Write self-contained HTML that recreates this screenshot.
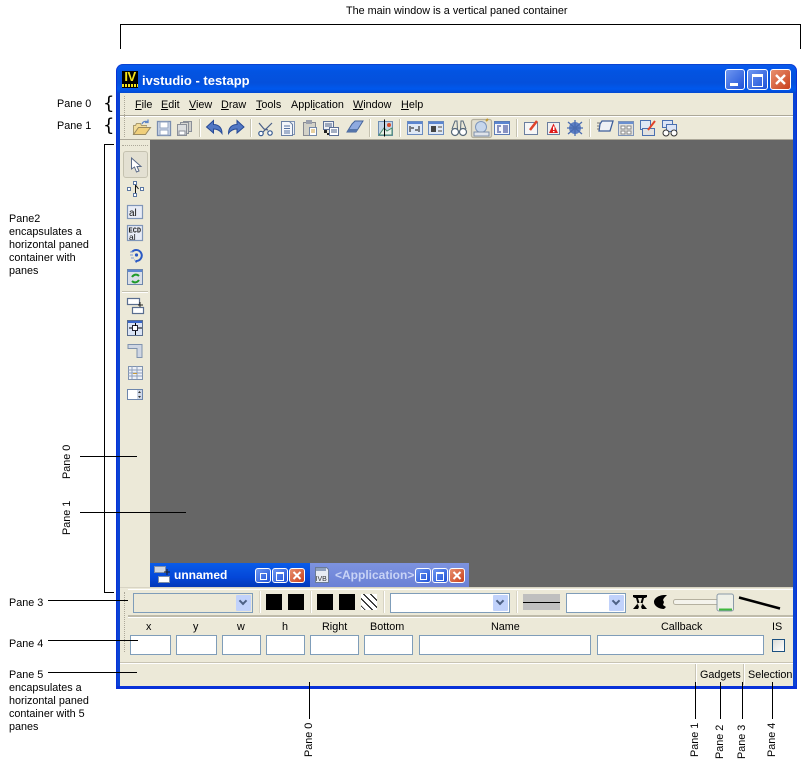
<!DOCTYPE html>
<html><head><meta charset="utf-8"><style>
html,body{margin:0;padding:0;background:#fff;width:801px;height:768px;overflow:hidden}
body{position:relative;font:10.8px "Liberation Sans",sans-serif;color:#000}
.a,.t,.l,svg,.i{position:absolute}
.t{white-space:nowrap;line-height:13px}
.l{background:#000}
.r{transform:rotate(-90deg);transform-origin:0 0}
.inp{position:absolute;box-sizing:border-box;background:#fff;border:1px solid #7f9db9}
.sep{position:absolute;width:1px;background:#c5c2b0;border-right:1px solid #fff}
.cmb{position:absolute;box-sizing:border-box;background:#fff;border:1px solid #7f9db9;height:20px}
.cmb i{position:absolute;right:1px;top:1px;width:15px;height:16px;background:#c1d2fb;border-radius:1px}
.cmb i:after{content:"";position:absolute;left:4px;top:3px;width:4px;height:4px;border:solid #4d6185;border-width:0 2px 2px 0;transform:rotate(45deg)}
.b{position:absolute;width:16px;height:16px;background:#000}
u{text-decoration:underline}
.wb{position:absolute;box-sizing:border-box;border:1px solid #fff;border-radius:3px;background:linear-gradient(135deg,#6f97f0,#1f52d8)}
.wb.x{background:linear-gradient(135deg,#e8906e,#c9401d)}
</style></head><body>

<!-- window frame -->
<div class="a" style="left:116px;top:64px;width:681px;height:625px;box-sizing:border-box;background:#0a43d4;border-radius:7px 7px 0 0;border-bottom:3px solid #0831d9;border-left:1px solid #0831d9;border-right:1px solid #0831d9"></div>
<div class="a" style="left:117px;top:65px;width:679px;height:28px;border-radius:6px 6px 0 0;background:linear-gradient(#0a5be6 0,#0558ee 3px,#0354e2 6px,#0450dc 18px,#0058ee 24px,#0349d0 28px)"></div>
<!-- title icon -->
<div class="a" style="left:122px;top:71px;width:16px;height:17px;background:#000"></div>
<div class="t" style="left:122px;top:70px;width:16px;text-align:center;color:#f4e31a;font:bold 13px/14px 'Liberation Sans',sans-serif;letter-spacing:-.5px">IV</div>
<div class="a" style="left:122px;top:84px;width:16px;height:3px;background:repeating-linear-gradient(90deg,#f4e31a 0 2px,#000 2px 3px)"></div>
<div class="t" style="left:142px;top:73px;color:#fff;font:bold 13px/16px 'Liberation Sans',sans-serif">ivstudio - testapp</div>
<!-- win buttons -->
<div class="wb" style="left:725px;top:69px;width:20px;height:21px"><div class="a" style="left:4px;top:13px;width:8px;height:3px;background:#fff"></div></div>
<div class="wb" style="left:747px;top:69px;width:21px;height:21px"><div class="a" style="left:4px;top:4px;width:9px;height:9px;border:1px solid #fff;border-top-width:3px"></div></div>
<div class="wb x" style="left:770px;top:69px;width:21px;height:21px"><svg style="left:3px;top:3px" width="13" height="13"><path d="M2 2L11 11M11 2L2 11" stroke="#fff" stroke-width="2.400" fill="none"/></svg></div>

<!-- client -->
<div class="a" style="left:120px;top:93px;width:673px;height:593px;background:#ece9d8"></div>
<!-- menu -->
<div class="a" style="left:120px;top:115px;width:673px;height:1px;background:#aca899"></div>
<div class="a" style="left:120px;top:116px;width:673px;height:1px;background:#fff"></div>
<div class="a" style="left:124px;top:96px;width:1px;height:41px;border-left:1px dotted #aca899"></div>
<div class="t" style="left:135px;top:99px"><u>F</u>ile</div>
<div class="t" style="left:161px;top:99px"><u>E</u>dit</div>
<div class="t" style="left:189px;top:99px"><u>V</u>iew</div>
<div class="t" style="left:221px;top:99px"><u>D</u>raw</div>
<div class="t" style="left:256px;top:99px"><u>T</u>ools</div>
<div class="t" style="left:291px;top:99px">Appl<u>i</u>cation</div>
<div class="t" style="left:353px;top:99px"><u>W</u>indow</div>
<div class="t" style="left:401px;top:99px"><u>H</u>elp</div>

<!-- toolbar separators -->
<div class="sep" style="left:199px;top:119px;height:18px"></div>
<div class="sep" style="left:250px;top:119px;height:18px"></div>
<div class="sep" style="left:369px;top:119px;height:18px"></div>
<div class="sep" style="left:399px;top:119px;height:18px"></div>
<div class="sep" style="left:516px;top:119px;height:18px"></div>
<div class="sep" style="left:589px;top:119px;height:18px"></div>

<!-- toolbar icons -->
<svg style="left:0;top:0" width="801" height="768" fill="none" stroke-width="1">
 <!-- open -->
 <path d="M133.500 134.500v-9h2l1-2h4l1 2h5v1" fill="#f2dc9a" stroke="#a89a70"/>
 <path d="M133.500 134.500h12l5-7h-12z" fill="#f0cf7a" stroke="#9a8a60"/>
 <path d="M142 124c1-3 4-3 6-2M148 119.500v3h-3" stroke="#5f86c6" stroke-width="1.300"/>
 <!-- save -->
 <rect x="157.500" y="121.500" width="13" height="14" fill="#cfd9ea" stroke="#7a8eb0" stroke-width="1.300"/><rect x="160" y="122" width="8" height="6" fill="#fff" stroke="#93a4c0"/><rect x="160" y="130" width="8" height="5" fill="#fff" stroke="#93a4c0"/>
 <!-- save all -->
 <rect x="183.500" y="121.500" width="8" height="10" fill="#d0d0cc" stroke="#8a8f98"/><rect x="180.500" y="122.500" width="8" height="11" fill="#d8d8d4" stroke="#8a8f98"/><rect x="177.500" y="124.500" width="9" height="11" fill="#dcdedf" stroke="#8a8f98"/><rect x="179" y="131" width="6" height="4" fill="#fff" stroke="#8a8f98"/>
 <!-- undo / redo -->
 <path d="M206.500 127l7-6.500v4c5 0 8.500 3 8.500 9-2-3-5-4.500-8.500-4.500v4z" fill="#5278c4" stroke="#274a96"/>
 <path d="M244 127l-7-6.500v4c-5 0-8.500 3-8.500 9 2-3 5-4.500 8.500-4.500v4z" fill="#5278c4" stroke="#274a96"/>
 <!-- cut -->
 <path d="M272 123l-9 9M259 123l5 6 4 1" stroke="#4a5f87" stroke-width="1.200"/><circle cx="261" cy="133.500" r="2.200" fill="#fff" stroke="#34588f" stroke-width="1.200"/><circle cx="270" cy="133" r="2.200" fill="#fff" stroke="#34588f" stroke-width="1.200"/>
 <!-- copy -->
 <rect x="285.500" y="121.500" width="9" height="13" fill="#eef1f6" stroke="#7f93b4"/><path d="M281.500 121.500h8l3 3v11h-11z" fill="#f4f6fa" stroke="#6a80a4"/><path d="M284 126h6M284 128.500h6M284 131h6M284 133h6" stroke="#5470a0"/>
 <!-- paste -->
 <rect x="303.500" y="122.500" width="12" height="13" fill="#d4d2c8" stroke="#888a92"/><rect x="306" y="120" width="6" height="4" fill="#9ba0ad"/><rect x="309.500" y="127.500" width="7" height="8" fill="#fff" stroke="#7488a8"/><path d="M311 130h4M311 132h4" stroke="#d0a040"/>
 <!-- paste special -->
 <path d="M323.500 121.500h10v8h-10z" fill="#eef1f6" stroke="#5b6f96"/><path d="M329.500 127.500h9v8h-9z" fill="#fff" stroke="#5b6f96"/><path d="M325 124h7M325 126h7M331 130h6M331 132h6" stroke="#4a5f87"/><rect x="324" y="130" width="3" height="3" fill="#222"/><rect x="327" y="133" width="2" height="2" fill="#222"/>
 <!-- eraser -->
 <path d="M347 132l5-8 3-3h8l-5 8-2 3z" fill="#8eaae0" stroke="#45649a"/><path d="M347 132h9l2-3h-9z" fill="#5575aa"/>
 <!-- image bar -->
 <rect x="378.500" y="121.500" width="14" height="14" fill="#c3d4e4" stroke="#6d8db4"/><path d="M379 135l5-7 3 3 5-3v7z" fill="#e8f0e8" stroke="#4a8c6a"/><circle cx="389" cy="125" r="2" fill="#d94f2a"/><path d="M384.500 119.500v17" stroke="#000"/>
 <!-- windows -->
 <rect x="407.500" y="121.500" width="15" height="13" fill="#dfe8f5" stroke="#6a8bc0"/><rect x="408" y="122" width="14" height="2" fill="#5b85d0"/><path d="M410 126v6M419 132v-6M411 128h3M415 130h3" stroke="#111"/>
 <rect x="428.500" y="121.500" width="15" height="13" fill="#dfe8f5" stroke="#6a8bc0"/><rect x="429" y="122" width="14" height="2" fill="#5b85d0"/><rect x="431" y="126" width="5" height="6" fill="#444"/><rect x="438" y="126" width="4" height="2" fill="#999"/><rect x="438" y="130" width="4" height="2" fill="#999"/>
 <!-- binoculars -->
 <circle cx="455" cy="132" r="3.500" fill="#fff" stroke="#56687a" stroke-width="1.200"/><circle cx="463" cy="132" r="3.500" fill="#fff" stroke="#56687a" stroke-width="1.200"/><path d="M452 129l3-8h2l.5 9M466 129l-3-8h-2l-.5 9" stroke="#56687a"/>
 <!-- inspector selected -->
 <rect x="471.500" y="119.500" width="20" height="18" rx="2" fill="#e2dfd0" stroke="#b5b1a0" stroke-width="1.300"/>
 <circle cx="481" cy="127" r="5.500" fill="#c6d6ec" stroke="#7e96bc"/><path d="M474 136h15v-4h-15z" fill="#dfe3ea" stroke="#7e8fa9"/><path d="M486 121l2-2" stroke="#c09a30" stroke-width="2"/>
 <!-- list -->
 <rect x="494.500" y="121.500" width="15" height="13" fill="#f4f6fb" stroke="#5b7bb5"/><rect x="495" y="122" width="14" height="2" fill="#5b85d0"/><path d="M497 126h4M497 128h2M497 130h2M497 132h4M503 126h5M503 128h5M503 130h5M503 132h5" stroke="#1b2f8a"/>
 <!-- edit -->
 <rect x="524.500" y="122.500" width="13" height="12" fill="#f6f6f6" stroke="#6a7e9f"/><path d="M530 130l7-9" stroke="#e0442a" stroke-width="2.500"/>
 <!-- warn -->
 <rect x="547.500" y="122.500" width="12" height="12" fill="#f0f0f0" stroke="#6a7e9f"/><path d="M553.500 123.500l4.500 9.500h-9z" fill="#e01b1b"/><rect x="553" y="126.500" width="1.500" height="3.500" fill="#fff"/><rect x="553" y="131" width="1.500" height="1.200" fill="#fff"/>
 <!-- bug -->
 <circle cx="575" cy="128" r="6" fill="#5d7fc4"/><path d="M568 122l14 12M568 134l14-12M575 120v16M567 128h16" stroke="#4a6cb0" stroke-width="1.300"/>
 <!-- book -->
 <path d="M600 124l2-3h11l-3 10h-11z" fill="#eef1f6" stroke="#3f5f9a" stroke-width="1.300"/><path d="M597 123h3M597 126h2M597 129h2" stroke="#777"/>
 <!-- grid -->
 <rect x="618.500" y="121.500" width="15" height="14" fill="#e2e2e0" stroke="#7d93b8"/><rect x="619" y="122" width="14" height="2" fill="#6a8fd0"/><rect x="621" y="126" width="4" height="3" fill="#fff" stroke="#888"/><rect x="627" y="126" width="4" height="3" fill="#fff" stroke="#888"/><rect x="621" y="131" width="4" height="3" fill="#fff" stroke="#888"/><rect x="627" y="131" width="4" height="3" fill="#fff" stroke="#888"/>
 <!-- edit windows -->
 <rect x="640.500" y="120.500" width="10" height="9" fill="#dfe8f5" stroke="#4a70b0"/><rect x="642.500" y="128.500" width="12" height="7" fill="#e2e2e0" stroke="#4a70b0"/><path d="M648 130l7-9" stroke="#e0442a" stroke-width="2"/>
 <!-- find windows -->
 <rect x="662.500" y="120.500" width="10" height="7" fill="#dbe4f5" stroke="#4a70b0"/><rect x="666.500" y="124.500" width="10" height="7" fill="#dbe4f5" stroke="#4a70b0"/><circle cx="666" cy="133" r="3" fill="#fff" stroke="#333"/><circle cx="674" cy="133" r="3" fill="#fff" stroke="#333"/>
</svg>

<!-- main area -->
<div class="a" style="left:120px;top:139px;width:673px;height:1px;background:#aca899"></div>
<div class="a" style="left:150px;top:140px;width:643px;height:447px;background:#666"></div>
<div class="a" style="left:122px;top:145px;width:26px;height:1px;border-top:1px dotted #aca899"></div>
<div class="a" style="left:123px;top:151px;width:25px;height:27px;box-sizing:border-box;background:#e3e0d2;border:1px solid #c5c2b0;border-radius:3px"></div>
<div class="a" style="left:122px;top:291px;width:26px;height:1px;background:#c5c2b0"></div>
<div class="a" style="left:122px;top:292px;width:26px;height:1px;background:#fff"></div>

<svg style="left:0;top:0" width="801" height="768" fill="none">
 <path d="M131.500 158v11l3-2 2 5 2.500-1-2-4.500h4z" fill="#fff" stroke="#5a6a88"/>
 <path d="M135.500 184v10M135.500 185l3 4" stroke="#111"/><rect x="127.500" y="187.500" width="3" height="3" fill="#fff" stroke="#5a76a2"/><rect x="133.500" y="181.500" width="3" height="3" fill="#fff" stroke="#5a76a2"/><rect x="140.500" y="187.500" width="3" height="3" fill="#fff" stroke="#5a76a2"/><rect x="133.500" y="193.500" width="3" height="3" fill="#fff" stroke="#5a76a2"/>
 <rect x="127.500" y="205.500" width="15" height="13" fill="#e8ecf6" stroke="#8096b8" stroke-width="1.200"/><text x="129" y="216" font-family="Liberation Sans" font-size="10" fill="#111">al</text>
 <rect x="127.500" y="225.500" width="15" height="15" fill="#e8ecf6" stroke="#8096b8" stroke-width="1.200"/><text x="128.500" y="232.500" font-family="Liberation Mono" font-size="7" font-weight="bold" fill="#222">ECD</text><text x="129" y="240" font-family="Liberation Sans" font-size="8.500" fill="#111">al</text>
 <path d="M132 252a5.500 5.500 0 1 1 4 9" stroke="#2a59c4" stroke-width="2"/><circle cx="136.500" cy="255" r="1.600" fill="#2a59c4"/><path d="M130 252h3M130 255h3M131 258h3" stroke="#7f9ad2"/><path d="M134 259l3 3-1 1z" fill="#2a59c4"/>
 <rect x="127.500" y="269.500" width="15" height="15" fill="#d9dee8" stroke="#6d86ac"/><rect x="128" y="270" width="14" height="2" fill="#5b85d0"/><path d="M132 277c2-3 5-3 7-1M139 280c-2 3-5 3-7 1" stroke="#1f9a2a" stroke-width="2"/>
 <rect x="127.500" y="298.500" width="12" height="6" fill="#fff" stroke="#5a6e8f" stroke-width="1.200"/><rect x="132.500" y="307.500" width="11" height="6" fill="#fff" stroke="#5a6e8f" stroke-width="1.200"/><path d="M140 302v5M138 305h5" stroke="#222"/>
 <rect x="127.500" y="320.500" width="15" height="15" fill="#dbe4f5" stroke="#5a6e8f"/><rect x="128" y="321" width="14" height="2" fill="#3a66c8"/><rect x="132.500" y="325.500" width="5" height="5" fill="#fff" stroke="#223"/><path d="M129 328h3M138 328h4M135.500 323v3M135.500 331v4" stroke="#000"/>
 <path d="M128 344.500h14v13h-5v-9h-9z" fill="#cfd6e3" stroke="#7f92ae"/>
 <rect x="128.500" y="366.500" width="14" height="13" fill="#eef1f7" stroke="#7f92ae"/><path d="M128 370h14M128 373h14M128 376h14M132 366v13M137 366v13" stroke="#8ea0bc"/><rect x="133" y="373" width="4" height="1" fill="#c79a3a"/>
 <rect x="127.500" y="389.500" width="15" height="10" fill="#fff" stroke="#6d86ac"/><rect x="137" y="390" width="5" height="9" fill="#cfd8e8"/><path d="M139.500 391l-1.500 2h3zM139.500 398l-1.500-2h3z" fill="#333"/>
</svg>

<!-- MDI tabs -->
<div class="a" style="left:150px;top:563px;width:160px;height:24px;background:linear-gradient(#0a5ce8,#0447d8 60%,#0338b8)"></div>
<div class="a" style="left:310px;top:563px;width:159px;height:24px;background:linear-gradient(#7d93e0,#6a80d5)"></div>
<svg style="left:154px;top:566px" width="18" height="18" fill="#fff" stroke="#7f8fa8"><rect x=".5" y=".5" width="11" height="6" fill="#d0d6e0"/><rect x="4.500" y="10.500" width="11" height="6"/><path d="M13 3v6M10 6h6" stroke="#222" fill="none"/></svg>
<div class="t" style="left:174px;top:568px;color:#fff;font:bold 12px/14px 'Liberation Sans',sans-serif">unnamed</div>
<svg style="left:314px;top:566px" width="16" height="18"><path d="M1.500 1.500h11l2 2v13h-13z" fill="#e8ecf4" stroke="#6b7b96"/><rect x="2" y="2" width="10" height="3" fill="#8fa0bd"/><text x="1.500" y="15" font-family="Liberation Sans" font-size="7" fill="#333">IVB</text></svg>
<div class="t" style="left:335px;top:568px;color:#c8d3f6;font:bold 12px/14px 'Liberation Sans',sans-serif">&lt;Application&gt;</div>
<div class="wb" style="left:255px;top:568px;width:16px;height:15px"><div class="a" style="left:4px;top:4px;width:5px;height:5px;border:1px solid #fff"></div></div>
<div class="wb" style="left:272px;top:568px;width:16px;height:15px"><div class="a" style="left:3px;top:3px;width:6px;height:6px;border:1px solid #fff;border-top-width:2px"></div></div>
<div class="wb x" style="left:289px;top:568px;width:16px;height:15px"><svg style="left:2px;top:1px" width="10" height="11"><path d="M1.500 2L8.500 9M8.500 2L1.500 9" stroke="#fff" stroke-width="2"/></svg></div>
<div class="wb" style="left:415px;top:568px;width:16px;height:15px"><div class="a" style="left:4px;top:4px;width:5px;height:5px;border:1px solid #fff"></div></div>
<div class="wb" style="left:432px;top:568px;width:16px;height:15px"><div class="a" style="left:3px;top:3px;width:6px;height:6px;border:1px solid #fff;border-top-width:2px"></div></div>
<div class="wb x" style="left:449px;top:568px;width:16px;height:15px"><svg style="left:2px;top:1px" width="10" height="11"><path d="M1.500 2L8.500 9M8.500 2L1.500 9" stroke="#fff" stroke-width="2"/></svg></div>

<!-- pane 3 toolbar -->
<div class="a" style="left:120px;top:587px;width:673px;height:1px;background:#d8d4c4"></div>
<div class="a" style="left:128px;top:589px;width:665px;height:1px;background:#fff"></div>
<div class="a" style="left:128px;top:615px;width:665px;height:2px;background:#bfbbaa"></div>
<div class="a" style="left:128px;top:617px;width:665px;height:1px;background:#fff"></div>
<div class="a" style="left:124px;top:592px;width:1px;height:60px;border-left:1px dotted #aca899"></div>
<div class="cmb" style="left:133px;top:593px;width:120px;background:#ece9d8"><i></i></div>
<div class="sep" style="left:259px;top:591px;height:22px;background:#d8d4c4"></div>
<div class="b" style="left:266px;top:594px"></div>
<div class="b" style="left:288px;top:594px"></div>
<div class="sep" style="left:310px;top:591px;height:22px;background:#d8d4c4"></div>
<div class="b" style="left:317px;top:594px"></div>
<div class="b" style="left:339px;top:594px"></div>
<div class="a" style="left:361px;top:594px;width:16px;height:16px;background:repeating-linear-gradient(45deg,#fff 0 2.500px,#000 2.500px 3.500px,#fff 3.500px 5px)"></div>
<div class="sep" style="left:383px;top:591px;height:22px;background:#d8d4c4"></div>
<div class="cmb" style="left:390px;top:593px;width:120px"><i></i></div>
<div class="sep" style="left:516px;top:591px;height:22px;background:#d8d4c4"></div>
<div class="a" style="left:523px;top:594px;width:37px;height:16px;background:#bfbfbf"></div>
<div class="a" style="left:523px;top:602px;width:37px;height:1px;background:#000"></div>
<div class="cmb" style="left:566px;top:593px;width:60px"><i></i></div>
<svg style="left:620px;top:585px" width="180" height="35" fill="none">
 <path d="M13 10h14v2l-2 1h-10l-2-1zM16 13h2l1.500 5h-1.500l-5 6h5l1-5v5zM24 13h-2l-1.500 5h1.500l5 6h-5l-1-5v5z" fill="#000"/>
 <path d="M45 10c-6 0-11 3-11 7s5 7 10 7l2-2-3-2 1-3-1-2 1-2 3-3z" fill="#000"/>
 <rect x="53.500" y="14.500" width="46" height="5" rx="2" fill="#f4f3ec" stroke="#b5b1a0"/>
 <rect x="97" y="9" width="16.500" height="17" rx="2" fill="#eef0e8" stroke="#8a9aa8"/>
 <path d="M99 24.500h13" stroke="#3fb83f" stroke-width="2"/>
 <path d="M119 12.500l41 11" stroke="#000" stroke-width="2.500"/>
</svg>

<!-- pane 4 -->
<div class="t" style="left:146px;top:621px">x</div>
<div class="t" style="left:193px;top:621px">y</div>
<div class="t" style="left:237px;top:621px">w</div>
<div class="t" style="left:282px;top:621px">h</div>
<div class="t" style="left:322px;top:621px">Right</div>
<div class="t" style="left:370px;top:621px">Bottom</div>
<div class="t" style="left:491px;top:621px">Name</div>
<div class="t" style="left:661px;top:621px">Callback</div>
<div class="t" style="left:772px;top:621px">IS</div>
<div class="inp" style="left:130px;top:635px;width:41px;height:20px"></div>
<div class="inp" style="left:176px;top:635px;width:41px;height:20px"></div>
<div class="inp" style="left:222px;top:635px;width:39px;height:20px"></div>
<div class="inp" style="left:266px;top:635px;width:39px;height:20px"></div>
<div class="inp" style="left:310px;top:635px;width:49px;height:20px"></div>
<div class="inp" style="left:364px;top:635px;width:49px;height:20px"></div>
<div class="inp" style="left:419px;top:635px;width:172px;height:20px"></div>
<div class="inp" style="left:597px;top:635px;width:167px;height:20px"></div>
<div class="a" style="left:772px;top:639px;width:13px;height:13px;box-sizing:border-box;border:1px solid #1c5180;background:linear-gradient(135deg,#dcdcd7,#fff)"></div>

<!-- status -->
<div class="a" style="left:120px;top:662px;width:673px;height:1px;background:#c8c4b4"></div>
<div class="a" style="left:120px;top:663px;width:673px;height:1px;background:#fff"></div>
<div class="sep" style="left:695px;top:664px;height:21px;background:#c8c4b4"></div>
<div class="sep" style="left:743px;top:664px;height:21px;background:#c8c4b4"></div>
<div class="t" style="left:700px;top:669px">Gadgets</div>
<div class="t" style="left:748px;top:669px">Selection</div>

<!-- annotations on top -->
<div class="t" style="left:346px;top:5px">The main window is a vertical paned container</div>
<div class="l" style="left:120px;top:24px;width:681px;height:1px"></div>
<div class="l" style="left:120px;top:24px;width:1px;height:25px"></div>
<div class="l" style="left:800px;top:24px;width:1px;height:25px"></div>
<div class="t" style="left:57px;top:98px">Pane 0</div>
<div class="t" style="left:103px;top:94px;font:18px/20px 'DejaVu Sans',sans-serif">{</div>
<div class="t" style="left:57px;top:120px">Pane 1</div>
<div class="t" style="left:103px;top:116px;font:18px/20px 'DejaVu Sans',sans-serif">{</div>
<div class="l" style="left:104px;top:144px;width:10px;height:1px"></div>
<div class="l" style="left:104px;top:144px;width:1px;height:449px"></div>
<div class="l" style="left:104px;top:592px;width:10px;height:1px"></div>
<div class="t" style="left:9px;top:213px">Pane2<br>encapsulates a<br>horizontal paned<br>container with<br>panes</div>
<div class="t r" style="left:61px;top:479px">Pane 0</div>
<div class="l" style="left:80px;top:456px;width:57px;height:1px"></div>
<div class="t r" style="left:61px;top:535px">Pane 1</div>
<div class="l" style="left:80px;top:512px;width:106px;height:1px"></div>
<div class="t" style="left:9px;top:597px">Pane 3</div>
<div class="l" style="left:48px;top:600px;width:80px;height:1px"></div>
<div class="t" style="left:9px;top:638px">Pane 4</div>
<div class="l" style="left:48px;top:640px;width:90px;height:1px"></div>
<div class="t" style="left:9px;top:669px">Pane 5<br>encapsulates a<br>horizontal paned<br>container with 5<br>panes</div>
<div class="l" style="left:48px;top:672px;width:89px;height:1px"></div>

<div class="l" style="left:309px;top:682px;width:1px;height:37px"></div>
<div class="l" style="left:695px;top:682px;width:1px;height:37px"></div>
<div class="l" style="left:720px;top:682px;width:1px;height:37px"></div>
<div class="l" style="left:742px;top:682px;width:1px;height:37px"></div>
<div class="l" style="left:772px;top:682px;width:1px;height:37px"></div>
<div class="t r" style="left:303px;top:757px">Pane 0</div>
<div class="t r" style="left:689px;top:757px">Pane 1</div>
<div class="t r" style="left:714px;top:759px">Pane 2</div>
<div class="t r" style="left:736px;top:759px">Pane 3</div>
<div class="t r" style="left:766px;top:757px">Pane 4</div>
</body></html>
